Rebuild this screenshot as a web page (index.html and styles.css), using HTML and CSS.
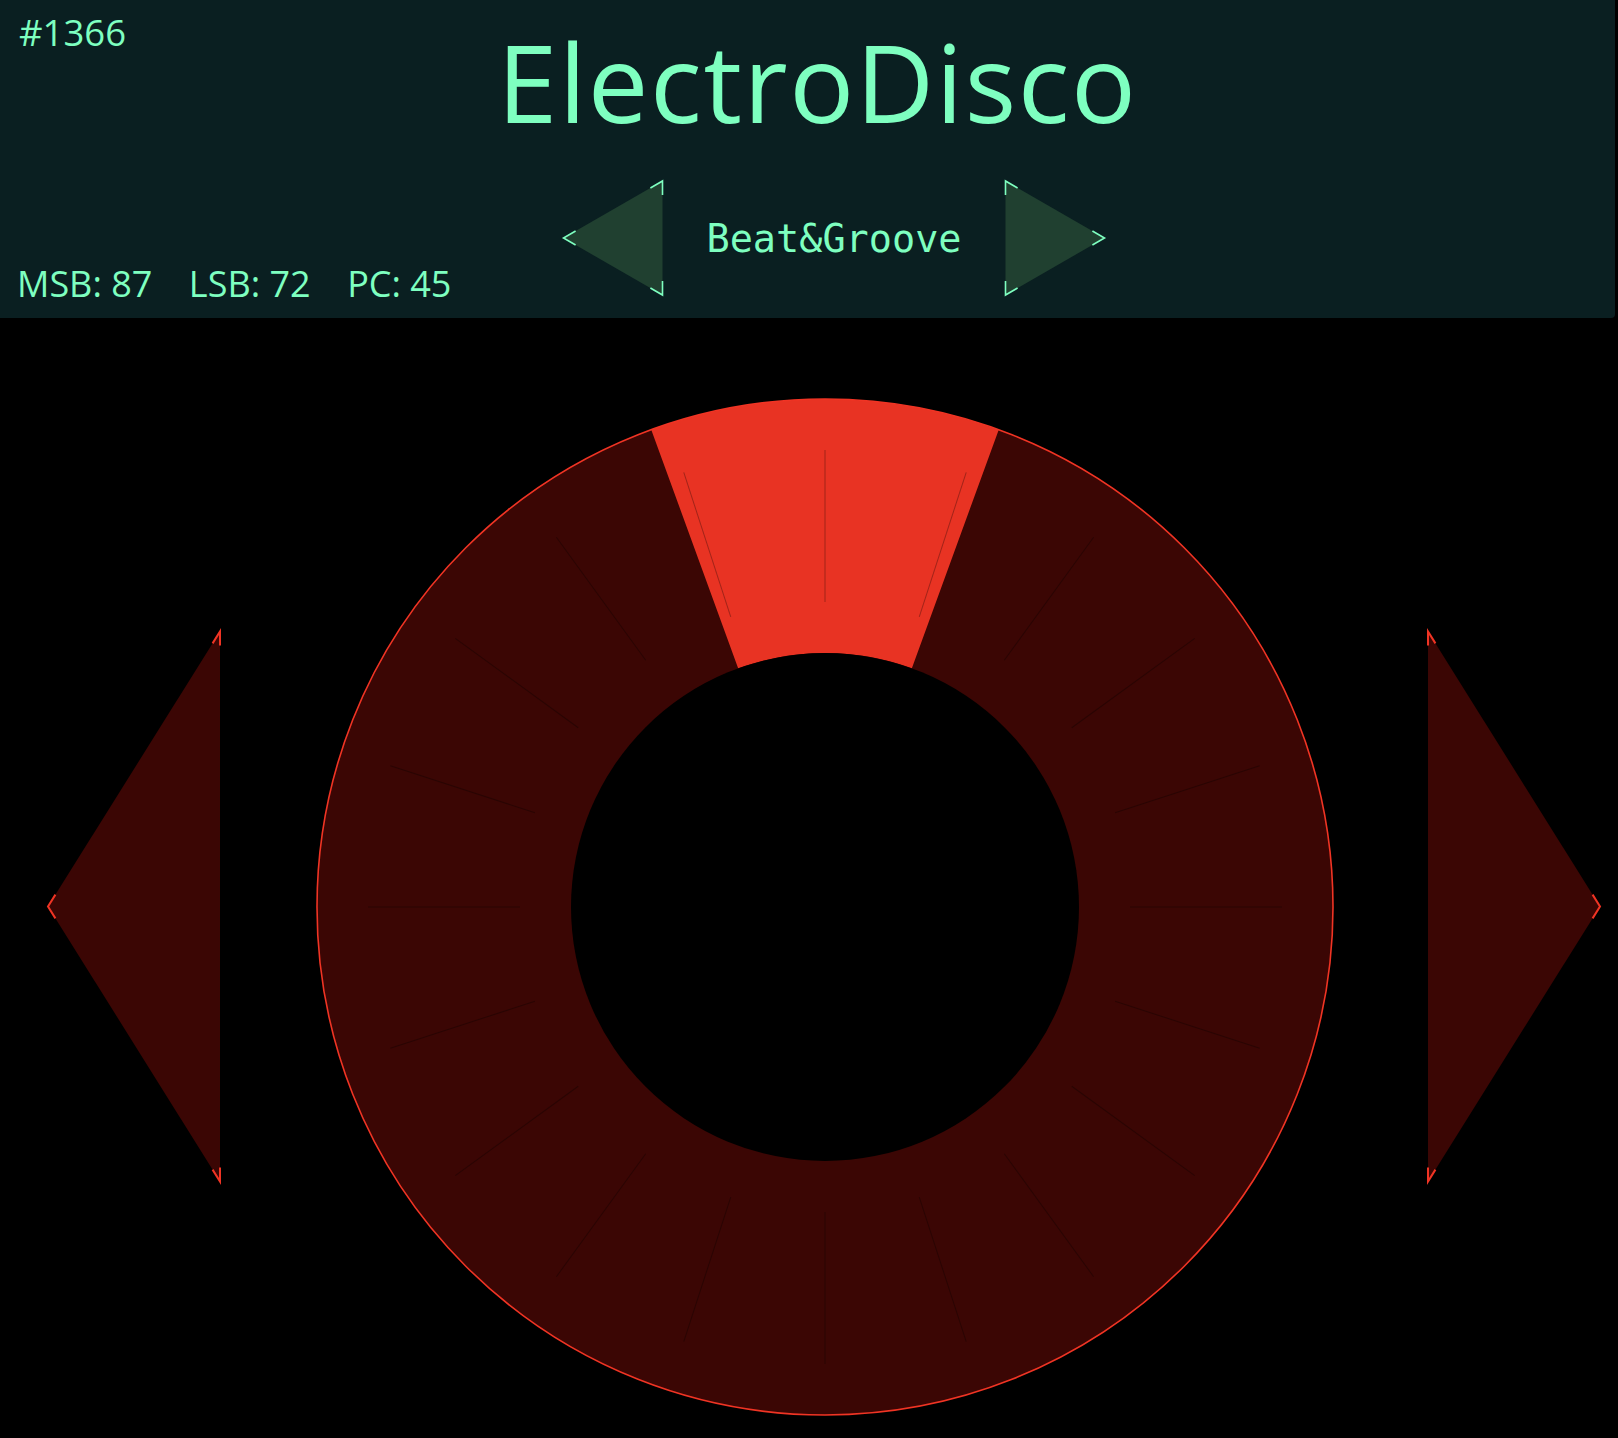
FILE: index.html
```html
<!DOCTYPE html>
<html lang="en">
<head>
<meta charset="utf-8">
<title>ElectroDisco</title>
<link rel="stylesheet" href="styles.css">
</head>
<body>
<header class="top">
  <div class="row row-title">
    <div class="style-id">#1366</div>
    <h1 class="title">ElectroDisco</h1>
    <div></div>
  </div>
  <div class="row row-nav">
    <div class="bank">
      <span>MSB: 87</span>
      <span>LSB: 72</span>
      <span>PC: 45</span>
    </div>
    <nav class="nav">
      <svg class="nav-arrow" viewBox="0 0 104 120" width="104" height="120">
        <polygon class="nav-fill" points="2.5,60 101.5,3 101.5,117"/>
        <polyline class="nav-mark" points="89.4,10 101.5,3 101.5,17"/>
        <polyline class="nav-mark" points="89.4,110 101.5,117 101.5,103"/>
        <polyline class="nav-mark" points="14.6,53 2.5,60 14.6,67"/>
      </svg>
      <div class="category">Beat&amp;Groove</div>
      <svg class="nav-arrow" viewBox="0 0 104 120" width="104" height="120">
        <polygon class="nav-fill" points="101.5,60 2.5,3 2.5,117"/>
        <polyline class="nav-mark" points="14.6,10 2.5,3 2.5,17"/>
        <polyline class="nav-mark" points="14.6,110 2.5,117 2.5,103"/>
        <polyline class="nav-mark" points="89.4,53 101.5,60 89.4,67"/>
      </svg>
    </nav>
    <div></div>
  </div>
</header>

<main class="stage">
  <svg class="big-arrow" viewBox="0 0 180 560" width="180" height="560">
    <polygon class="big-fill" points="4,279.5 176,4.5 176,554.5"/>
    <polyline class="big-mark" points="168.58,16.37 176,4.5 176,18.5"/>
    <polyline class="big-mark" points="168.58,542.63 176,554.5 176,540.5"/>
    <polyline class="big-mark" points="11.42,267.63 4,279.5 11.42,291.37"/>
  </svg>

  <svg class="wheel" viewBox="0 0 1020 1020" width="1020" height="1020">
    <circle class="wheel-ring" cx="510" cy="510" r="508"/>
    <path class="wheel-active" d="M 336.25 32.64 A 508 508 0 0 1 683.75 32.64 L 596.87 271.32 A 254 254 0 0 0 423.13 271.32 Z"/>
    <g class="ticks">
      <line x1="510" y1="53" x2="510" y2="205"/>
      <line x1="510" y1="53" x2="510" y2="205" transform="rotate(18 510 510)"/>
      <line x1="510" y1="53" x2="510" y2="205" transform="rotate(36 510 510)"/>
      <line x1="510" y1="53" x2="510" y2="205" transform="rotate(54 510 510)"/>
      <line x1="510" y1="53" x2="510" y2="205" transform="rotate(72 510 510)"/>
      <line x1="510" y1="53" x2="510" y2="205" transform="rotate(90 510 510)"/>
      <line x1="510" y1="53" x2="510" y2="205" transform="rotate(108 510 510)"/>
      <line x1="510" y1="53" x2="510" y2="205" transform="rotate(126 510 510)"/>
      <line x1="510" y1="53" x2="510" y2="205" transform="rotate(144 510 510)"/>
      <line x1="510" y1="53" x2="510" y2="205" transform="rotate(162 510 510)"/>
      <line x1="510" y1="53" x2="510" y2="205" transform="rotate(180 510 510)"/>
      <line x1="510" y1="53" x2="510" y2="205" transform="rotate(198 510 510)"/>
      <line x1="510" y1="53" x2="510" y2="205" transform="rotate(216 510 510)"/>
      <line x1="510" y1="53" x2="510" y2="205" transform="rotate(234 510 510)"/>
      <line x1="510" y1="53" x2="510" y2="205" transform="rotate(252 510 510)"/>
      <line x1="510" y1="53" x2="510" y2="205" transform="rotate(270 510 510)"/>
      <line x1="510" y1="53" x2="510" y2="205" transform="rotate(288 510 510)"/>
      <line x1="510" y1="53" x2="510" y2="205" transform="rotate(306 510 510)"/>
      <line x1="510" y1="53" x2="510" y2="205" transform="rotate(324 510 510)"/>
      <line x1="510" y1="53" x2="510" y2="205" transform="rotate(342 510 510)"/>
    </g>
    <circle class="wheel-edge" cx="510" cy="510" r="508"/>
    <circle class="wheel-hole" cx="510" cy="510" r="254"/>
  </svg>

  <svg class="big-arrow" viewBox="0 0 180 560" width="180" height="560">
    <polygon class="big-fill" points="176,279.5 4,4.5 4,554.5"/>
    <polyline class="big-mark" points="11.42,16.37 4,4.5 4,18.5"/>
    <polyline class="big-mark" points="11.42,542.63 4,554.5 4,540.5"/>
    <polyline class="big-mark" points="168.58,267.63 176,279.5 168.58,291.37"/>
  </svg>
</main>
</body>
</html>
```

FILE: styles.css
```css
* { box-sizing: border-box; }

html, body {
  margin: 0;
  padding: 0;
  background: #000;
}

body {
  width: 1618px;
  height: 1438px;
  overflow: hidden;
  font-family: "Open Sans", "Noto Sans", sans-serif;
  color: #7effc0;
}

.top {
  width: 1615px;
  height: 318px;
  background: #0a1f21;
  border-bottom-right-radius: 4px;
  padding: 8px 0 10px 0;
  display: flex;
  flex-direction: column;
}

.row {
  display: grid;
  grid-template-columns: 1fr auto 1fr;
}

.row-title {
  align-items: start;
}

.style-id {
  font-size: 36.5px;
  line-height: normal;
  padding-left: 19px;
  margin-top: -1px;
}

.title {
  margin: 0;
  font-weight: 400;
  font-size: 108px;
  letter-spacing: 1.6px;
  line-height: normal;
  padding-left: 20px;
  white-space: nowrap;
}

.row-nav {
  flex: 1;
  margin-top: 23px;
}

.bank {
  align-self: end;
  display: flex;
  gap: 36.5px;
  font-size: 36px;
  line-height: normal;
  padding-left: 17px;
  white-space: nowrap;
}

.nav {
  align-self: start;
  display: flex;
  align-items: center;
  gap: 42px;
  padding-left: 53px;
}

.nav-arrow { display: block; }

.nav-fill { fill: #204030; }

.nav-mark {
  fill: none;
  stroke: #7effc0;
  stroke-width: 1.6;
}

.category {
  font-family: "DejaVu Sans Mono", "Liberation Mono", monospace;
  font-size: 38.5px;
  line-height: normal;
  white-space: nowrap;
}

.stage {
  display: flex;
  align-items: center;
  padding: 79px 0 0 44px;
}

.big-arrow { display: block; flex: none; }

.big-fill { fill: #3b0604; }

.big-mark {
  fill: none;
  stroke: #f03424;
  stroke-width: 2;
}

.wheel {
  display: block;
  flex: none;
  margin: 0 89px 0 91px;
}

.wheel-ring { fill: #3b0604; }

.wheel-active { fill: #e83323; }

.ticks line {
  stroke: rgba(0, 0, 0, 0.3);
  stroke-width: 1;
}

.wheel-edge {
  fill: none;
  stroke: #f03424;
  stroke-width: 1.6;
}

.wheel-hole { fill: #000; }
```
